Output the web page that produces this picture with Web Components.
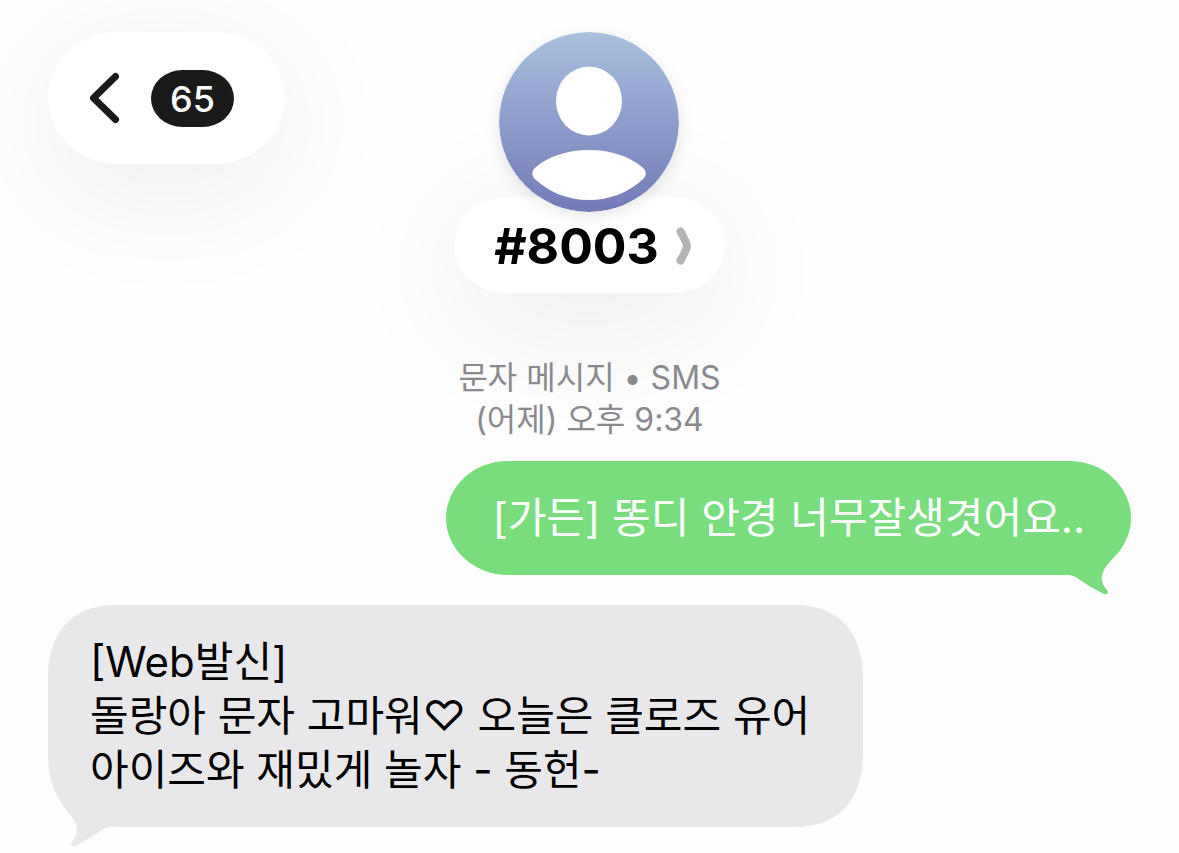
<!DOCTYPE html>
<html lang="ko">
<head>
<meta charset="utf-8">
<meta name="viewport" content="width=device-width, initial-scale=1">
<title>#8003</title>
<style>
  body {
    margin: 0;
    background: #fefefe;
    color: #000;
    font-family: Inter, "Noto Sans CJK KR", sans-serif;
  }
</style>
</head>
<body>
<message-thread>
  <thread-header slot="header">
    <back-button slot="start">65</back-button>
    <contact-card>#8003</contact-card>
  </thread-header>
  <thread-stamp>
    <span slot="service">문자 메시지 • SMS</span>
    (어제) 오후 9:34
  </thread-stamp>
  <chat-bubble from="me">[가든] 똥디 안경 너무잘생겻어요..</chat-bubble>
  <chat-bubble from="them">[Web발신]<br>돌랑아 문자 고마워♡ 오늘은 클로즈 유어 아이즈와 재밌게 놀자 - 동헌-</chat-bubble>
</message-thread>

<script>
  const define = (name, html) => {
    const template = document.createElement('template');
    template.innerHTML = html;
    customElements.define(name, class extends HTMLElement {
      constructor() {
        super();
        this.attachShadow({ mode: 'open' }).append(template.content.cloneNode(true));
      }
    });
  };

  define('message-thread', `
    <style>
      :host { display: block; padding: 32px 48px 26px; overflow: hidden; }
      main { display: flex; flex-direction: column; }
    </style>
    <slot name="header"></slot>
    <main><slot></slot></main>`);

  define('thread-header', `
    <style>
      :host { display: grid; grid-template-columns: 1fr auto 1fr; align-items: start; }
      .start { justify-self: start; }
    </style>
    <div class="start"><slot name="start"></slot></div>
    <slot></slot>`);

  define('back-button', `
    <style>
      :host { display: block; }
      button {
        display: flex; align-items: center; gap: 32px;
        height: 132px; padding: 0 51px 0 40px;
        border: 0; border-radius: 70px / 66px;
        background: #fff; color: #1a1a1a; font: inherit;
        box-shadow: 0 24px 128px rgba(0, 0, 0, .08);
      }
      svg { display: block; width: 31px; height: 52px; }
      .count {
        display: flex; align-items: center; justify-content: center;
        box-sizing: border-box; width: 83px; height: 57px; padding-top: 2px;
        border-radius: 32px / 29px;
        background: #1a1a1a; color: #fff;
        font-size: 36px; font-weight: 500; line-height: 55px;
      }
    </style>
    <button type="button" aria-label="뒤로">
      <svg viewBox="0 0 31 52" fill="none" stroke="currentColor" stroke-width="7" stroke-linecap="round" stroke-linejoin="round" aria-hidden="true">
        <path d="M27.5 4.5 5.5 26 27.5 47.5"/>
      </svg>
      <span class="count"><slot></slot></span>
    </button>`);

  define('contact-card', `
    <style>
      :host { display: flex; flex-direction: column; align-items: center; }
      .avatar {
        position: relative; z-index: 1; display: block;
        width: 180px; height: 180px; margin-bottom: -15px;
        border-radius: 50%;
        box-shadow: 0 4px 16px rgba(0, 0, 0, .1);
      }
      button {
        display: flex; align-items: center; gap: 16px;
        height: 96px; padding: 2px 32px 0 40px;
        border: 0; border-radius: 52px / 48px;
        background: #fff; color: #000; font: inherit;
        font-size: 50px; font-weight: 700; line-height: 60px;
        box-shadow: 0 24px 128px rgba(0, 0, 0, .09);
      }
      .chevron { display: block; width: 18px; height: 38px; }
    </style>
    <svg class="avatar" viewBox="0 0 180 180" aria-hidden="true">
      <defs>
        <linearGradient id="sky" x1="0" y1="0" x2="0" y2="1">
          <stop offset="0" stop-color="#a9c0df"/>
          <stop offset="1" stop-color="#727ab7"/>
        </linearGradient>
      </defs>
      <circle cx="90" cy="90" r="90" fill="url(#sky)"/>
      <ellipse cx="90" cy="69" rx="33" ry="34.5" fill="#fff"/>
      <path fill="#fff" d="M90 118C111 118 130 124 143 135C148 139 148 144 143 148C129 161 110 168 90 168S51 161 37 148C32 144 32 139 37 135C50 124 69 118 90 118Z"/>
    </svg>
    <button type="button">
      <slot></slot>
      <svg class="chevron" viewBox="0 0 18 38" fill="none" stroke="#b3b3b3" stroke-width="8" stroke-linecap="round" stroke-linejoin="round" aria-hidden="true">
        <path d="M5.5 4.5Q12 16 12 19T5.5 33.5"/>
      </svg>
    </button>`);

  define('thread-stamp', `
    <style>
      :host {
        display: block; margin: 64px 0 20px;
        color: #8a8a8e; text-align: center;
        font-size: 32px; line-height: 42px;
      }
      .service, .time { display: block; }
    </style>
    <span class="service"><slot name="service"></slot></span>
    <span class="time"><slot></slot></span>`);

  define('chat-bubble', `
    <style>
      :host {
        display: block; position: relative; box-sizing: border-box;
        width: fit-content; max-width: min(100%, 815px);
        padding: 30px 42px; border-radius: 64px / 62px;
        background: var(--fill); color: var(--ink);
        font-size: 42px; line-height: 54px; word-break: keep-all;
      }
      :host([from="me"]) {
        --fill: #79dd7e; --ink: #fff;
        align-self: flex-end; margin-bottom: 30px;
        padding: 30px 46px;
        border-radius: 62px / 57px;
      }
      :host([from="them"]) { --fill: #e8e8ea; --ink: #000; align-self: flex-start; }
      @supports (corner-shape: superellipse(1.25)) {
        :host([from="them"]) { border-radius: 70px / 76px; corner-shape: superellipse(1.25); }
      }
      svg {
        position: absolute; right: 0; bottom: -20px;
        width: 64px; height: 60px; fill: var(--fill);
      }
      :host([from="them"]) svg { right: auto; left: 0; transform: scaleX(-1); }
    </style>
    <slot></slot>
    <svg viewBox="0 0 64 60" aria-hidden="true">
      <path d="M0 40C8 40 10 43 16 47C23 52 31 56 37 59C40 60 42 58 40 55C36 50 34 46 35 41C36 35 39 31 43 27Q47 22 50 17L40 4L0 4Z"/>
    </svg>`);
</script>
</body>
</html>
